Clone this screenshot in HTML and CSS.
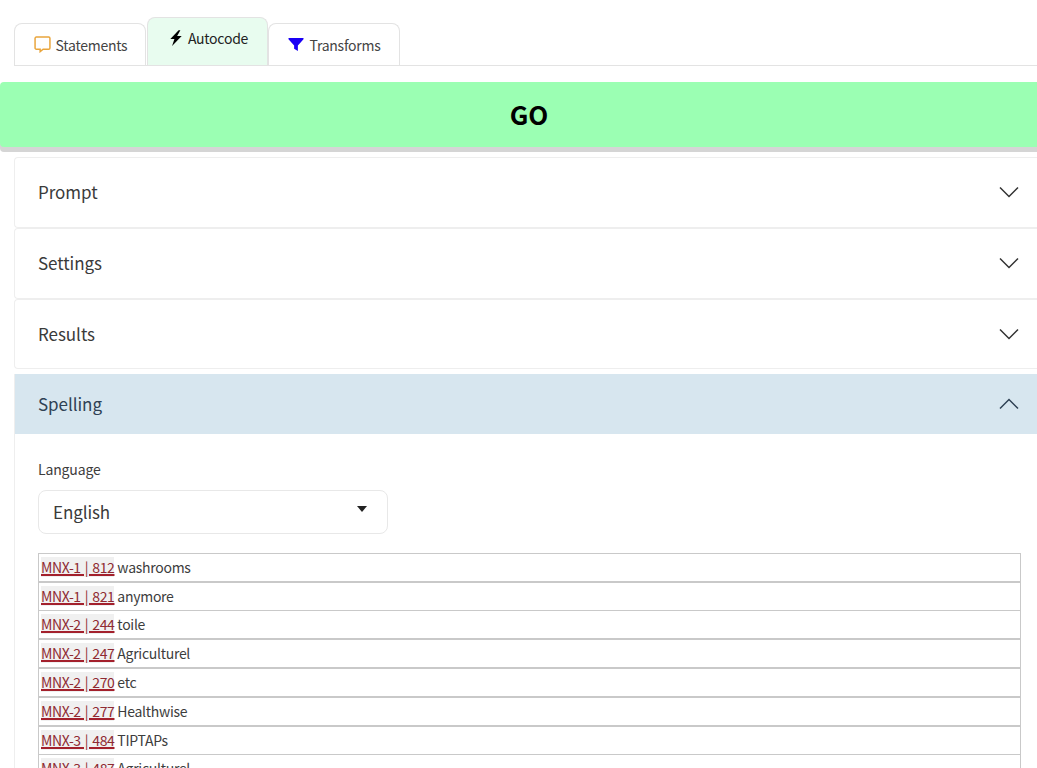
FILE: index.html
```html
<!DOCTYPE html>
<html lang="en">
<head>
<meta charset="utf-8">
<title>Autocode</title>
<link rel="stylesheet" href="styles.css">
</head>
<body>
<nav class="tabs">
  <div class="tab">
    <svg class="icon" viewBox="0 0 16 16" width="17" height="17"><path d="M2.2 1h11.6c.7 0 1.2.5 1.2 1.2v9c0 .7-.5 1.2-1.2 1.2H8.600l-2.800 2.300v-2.300H2.200c-.7 0-1.200-.5-1.200-1.200v-9C1 1.500 1.500 1 2.200 1z" fill="none" stroke="#e9a53c" stroke-width="1.400"/></svg>
    <span>Statements</span>
  </div>
  <div class="tab tab-active">
    <svg class="icon" viewBox="0 0 16 18" width="14" height="16"><path d="M11 0 1.500 10h4.700L3.500 18 14.500 6.800H9.300L13 0z" fill="#000"/></svg>
    <span>Autocode</span>
  </div>
  <div class="tab">
    <svg class="icon" viewBox="0 0 16 16" width="16" height="15"><path d="M0 1h16v1.500L10 9v6l-4-2.500V9L0 2.500z" fill="#1a00f5"/></svg>
    <span>Transforms</span>
  </div>
</nav>
<button class="go">GO</button>
<main class="accordion">
  <section class="item">
    <div class="head"><span>Prompt</span><svg class="chev" viewBox="0 0 20 12" width="20" height="12"><path d="M1 1.500l9 9 9-9" fill="none" stroke="#333" stroke-width="1.500"/></svg></div>
  </section>
  <section class="item">
    <div class="head"><span>Settings</span><svg class="chev" viewBox="0 0 20 12" width="20" height="12"><path d="M1 1.500l9 9 9-9" fill="none" stroke="#333" stroke-width="1.500"/></svg></div>
  </section>
  <section class="item">
    <div class="head"><span>Results</span><svg class="chev" viewBox="0 0 20 12" width="20" height="12"><path d="M1 1.500l9 9 9-9" fill="none" stroke="#333" stroke-width="1.500"/></svg></div>
  </section>
  <section class="item item-open">
    <div class="head head-open"><span>Spelling</span><svg class="chev" viewBox="0 0 20 12" width="20" height="12"><path d="M1 10.500l9-9 9 9" fill="none" stroke="#2f4154" stroke-width="1.500"/></svg></div>
    <div class="body">
      <label class="label">Language</label>
      <div class="select"><span>English</span><i class="caret"></i></div>
      <ul class="rows">
        <li><a href="#">MNX-1 | 812</a> washrooms</li>
        <li><a href="#">MNX-1 | 821</a> anymore</li>
        <li><a href="#">MNX-2 | 244</a> toile</li>
        <li><a href="#">MNX-2 | 247</a> Agriculturel</li>
        <li><a href="#">MNX-2 | 270</a> etc</li>
        <li><a href="#">MNX-2 | 277</a> Healthwise</li>
        <li><a href="#">MNX-3 | 484</a> TIPTAPs</li>
        <li><a href="#">MNX-3 | 487</a> Agriculturel</li>
      </ul>
    </div>
  </section>
</main>
</body>
</html>
```
FILE: styles.css
```css
html, body {
  margin: 0;
  height: 768px;
  overflow: hidden;
  background: #fff;
}
body {
  font-family: "Noto Sans CJK SC", "Open Sans", sans-serif;
  color: #333;
}
.tabs {
  display: flex;
  align-items: flex-end;
  gap: 1px;
  height: 65px;
  margin-left: 14px;
  border-bottom: 1px solid #e3e3e3;
}
.tab {
  display: flex;
  align-items: center;
  justify-content: center;
  gap: 5px;
  box-sizing: border-box;
  width: 132px;
  height: 42px;
  padding-left: 1px;
  border: 1px solid #e3e3e3;
  border-bottom: 0;
  border-radius: 8px 8px 0 0;
  font-size: 14px;
  letter-spacing: -0.25px;
  line-height: 20px;
  color: #444;
}
.tab-active {
  width: 121px;
  height: 48px;
  margin-right: -1px;
  background: #e8fcef;
  padding-left: 2px;
  padding-bottom: 8px;
  color: #222;
}
.icon { flex: none; }
.go {
  display: block;
  width: 100%;
  height: 65px;
  margin: 16px 0 0;
  padding: 0 0 1px 21px;
  border: 0;
  border-radius: 4px 0 0 4px;
  background: #9bffb3;
  box-shadow: 0 5px 0 #d5d5d5;
  font-family: inherit;
  font-size: 26px;
  line-height: 32px;
  font-weight: 700;
  color: #000;
  text-align: center;
}
.accordion {
  margin: 10px 0 0 14px;
}
.item {
  box-sizing: border-box;
  height: 70.8px;
  border: 1px solid #eee;
  border-right: 0;
  border-radius: 4px 0 0 4px;
}
.head {
  display: flex;
  align-items: center;
  justify-content: space-between;
  height: 68px;
  padding: 0 18px 0 23px;
  font-size: 17px;
  letter-spacing: -0.05px;
  line-height: 24px;
  color: #3a3a3a;
}
.item-open {
  height: auto;
  margin-top: 4.6px;
  border: 0;
  border-left: 1px solid #eee;
  border-radius: 0;
}
.head-open {
  height: 60px;
  background: #d7e6ef;
  color: #2f4154;
}
.body {
  padding: 24px 16px 0 23px;
}
.label {
  display: block;
  font-size: 14px;
  letter-spacing: -0.15px;
  line-height: 22px;
  color: #3d3d3d;
}
.select {
  display: flex;
  align-items: center;
  justify-content: space-between;
  box-sizing: border-box;
  width: 350px;
  height: 44px;
  margin-top: 10px;
  padding: 0 20px 0 14px;
  border: 1px solid #e8e8e8;
  border-radius: 8px;
  font-size: 17px;
  letter-spacing: -0.1px;
  line-height: 24px;
  color: #3a3a3a;
}
.caret {
  border: 5px solid transparent;
  border-top: 6px solid #222;
  border-bottom: 0;
  margin-top: -5px;
}
.rows {
  list-style: none;
  margin: 18.8px 0 0;
  padding: 0;
}
.rows li {
  box-sizing: border-box;
  height: 29px;
  padding-left: 2px;
  border: 1px solid #c9c9c9;
  margin-bottom: -0.2px;
  font-size: 14px;
  letter-spacing: -0.28px;
  line-height: 26px;
  color: #3d3d3d;
}
.rows a {
  background: #f0f0f0;
  color: #8f2a32;
  letter-spacing: -0.4px;
  word-spacing: 1.4px;
  text-decoration: underline;
  text-decoration-color: #a3202c;
  text-decoration-thickness: 1.5px;
}
```
